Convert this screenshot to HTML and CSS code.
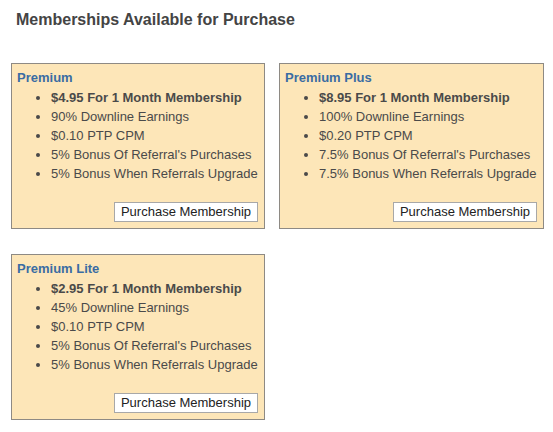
FILE: index.html
```html
<!DOCTYPE html>
<html>
<head>
<meta charset="utf-8">
<link rel="stylesheet" href="styles.css">
</head>
<body>
<h1 class="page-title">Memberships Available for Purchase</h1>
<div class="plans">
  <div class="plan plan-narrow">
    <div class="plan-name">Premium</div>
    <ul class="features">
      <li class="price">$4.95 For 1 Month Membership</li>
      <li>90% Downline Earnings</li>
      <li>$0.10 PTP CPM</li>
      <li>5% Bonus Of Referral's Purchases</li>
      <li>5% Bonus When Referrals Upgrade</li>
    </ul>
    <div class="actions"><button class="buy">Purchase Membership</button></div>
  </div>
  <div class="plan plan-wide">
    <div class="plan-name">Premium Plus</div>
    <ul class="features">
      <li class="price">$8.95 For 1 Month Membership</li>
      <li>100% Downline Earnings</li>
      <li>$0.20 PTP CPM</li>
      <li>7.5% Bonus Of Referral's Purchases</li>
      <li>7.5% Bonus When Referrals Upgrade</li>
    </ul>
    <div class="actions"><button class="buy">Purchase Membership</button></div>
  </div>
  <div class="plan plan-narrow">
    <div class="plan-name">Premium Lite</div>
    <ul class="features">
      <li class="price">$2.95 For 1 Month Membership</li>
      <li>45% Downline Earnings</li>
      <li>$0.10 PTP CPM</li>
      <li>5% Bonus Of Referral's Purchases</li>
      <li>5% Bonus When Referrals Upgrade</li>
    </ul>
    <div class="actions"><button class="buy">Purchase Membership</button></div>
  </div>
</div>
</body>
</html>
```
FILE: styles.css
```css
html, body {
  margin: 0;
  padding: 0;
  background: #ffffff;
}
body {
  font-family: "Liberation Sans", Arial, sans-serif;
  color: #4a4a4a;
}
.page-title {
  margin: 0;
  padding: 10px 0 0 16px;
  font-size: 16px;
  line-height: 20px;
  font-weight: bold;
  color: #444444;
}
.plans {
  display: grid;
  grid-template-columns: 254px 265px;
  column-gap: 14px;
  row-gap: 25px;
  padding: 33px 0 0 11px;
  align-items: start;
}
.plan {
  box-sizing: border-box;
  background: #fde6b8;
  border: 1px solid #8e8a84;
  padding: 6px 6px 6px 5px;
}
.plan-name {
  font-size: 13px;
  line-height: 16px;
  font-weight: bold;
  color: #3a6ca3;
}
.features {
  margin: 2px 0 0 0;
  padding: 0 0 0 34px;
  font-size: 13px;
  line-height: 19px;
  color: #4a4a4a;
}
.features .price {
  font-weight: bold;
}
.actions {
  display: flex;
  justify-content: flex-end;
  margin-top: 19px;
}
.buy {
  box-sizing: border-box;
  height: 20px;
  margin: 0;
  padding: 0 6px;
  background: #ffffff;
  border: 1px solid #a8a8a8;
  border-radius: 0;
  font-family: "Liberation Sans", Arial, sans-serif;
  font-size: 13px;
  line-height: 18px;
  color: #222222;
}
```
